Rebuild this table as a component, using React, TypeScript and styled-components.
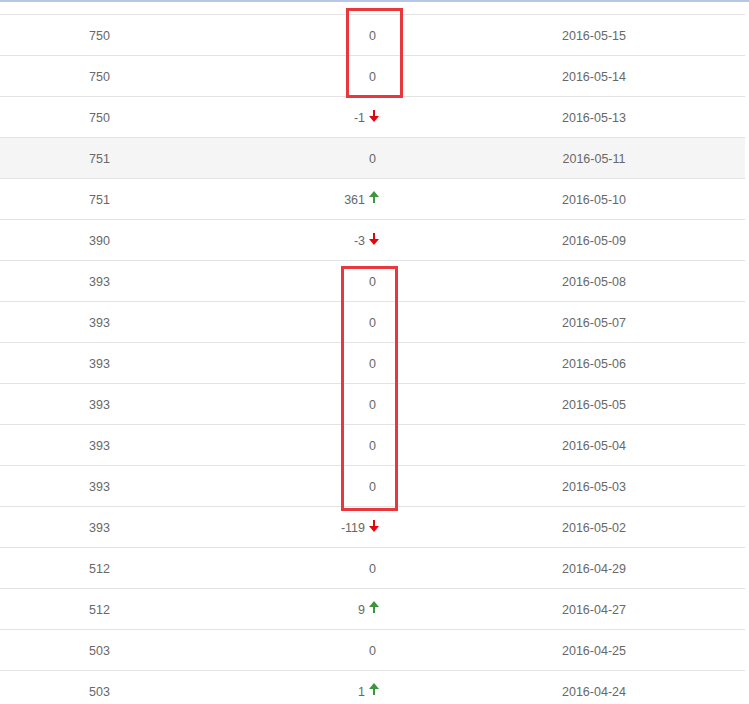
import styled, { createGlobalStyle } from "styled-components";

const GlobalStyle = createGlobalStyle`
  body {
    margin: 0;
    background: #fff;
    font-family: "Liberation Sans", Arial, sans-serif;
  }
`;

type Trend = "up" | "down" | null;

const rows: { rank: number; change: number; trend: Trend; date: string }[] = [
  { rank: 750, change: 0, trend: null, date: "2016-05-15" },
  { rank: 750, change: 0, trend: null, date: "2016-05-14" },
  { rank: 750, change: -1, trend: "down", date: "2016-05-13" },
  { rank: 751, change: 0, trend: null, date: "2016-05-11" },
  { rank: 751, change: 361, trend: "up", date: "2016-05-10" },
  { rank: 390, change: -3, trend: "down", date: "2016-05-09" },
  { rank: 393, change: 0, trend: null, date: "2016-05-08" },
  { rank: 393, change: 0, trend: null, date: "2016-05-07" },
  { rank: 393, change: 0, trend: null, date: "2016-05-06" },
  { rank: 393, change: 0, trend: null, date: "2016-05-05" },
  { rank: 393, change: 0, trend: null, date: "2016-05-04" },
  { rank: 393, change: 0, trend: null, date: "2016-05-03" },
  { rank: 393, change: -119, trend: "down", date: "2016-05-02" },
  { rank: 512, change: 0, trend: null, date: "2016-04-29" },
  { rank: 512, change: 9, trend: "up", date: "2016-04-27" },
  { rank: 503, change: 0, trend: null, date: "2016-04-25" },
  { rank: 503, change: 1, trend: "up", date: "2016-04-24" },
];

// Styled Components
const Page = styled.div`
  width: 749px;
  height: 704px;
  overflow: hidden;
  border-top: 2px solid #b4c8e4;
  box-sizing: border-box;
`;

const Table = styled.div`
  position: relative;
  width: 745px;
  padding-top: 12px;
`;

const Row = styled.div<{ $striped?: boolean }>`
  display: grid;
  grid-template-columns: 199px 244px 1fr;
  height: 40px;
  border-top: 1px solid #e3e3e3;
  background: ${(p) => (p.$striped ? "#f5f5f5" : "#fff")};
  color: #686868;
  font-size: 12.5px;
`;

const Cell = styled.div<{ $align?: "center" | "right" }>`
  display: flex;
  align-items: center;
  justify-content: ${(p) => (p.$align === "right" ? "flex-end" : "center")};
  padding-top: 2px;
`;

const ChangeCell = styled(Cell)<{ $plain?: boolean }>`
  padding-right: ${(p) => (p.$plain ? "67px" : "64px")};
  gap: 4px;
`;

const Arrow = styled.svg<{ $up?: boolean }>`
  width: 10px;
  height: 12px;
  margin-top: ${(p) => (p.$up ? "-6px" : "-4px")};
`;

const Highlight = styled.div<{ $left: number; $top: number; $w: number; $h: number }>`
  position: absolute;
  left: ${(p) => p.$left}px;
  top: ${(p) => p.$top}px;
  width: ${(p) => p.$w}px;
  height: ${(p) => p.$h}px;
  border: 3px solid #e8383d;
  box-sizing: border-box;
  pointer-events: none;
`;

const TrendIcon = ({ trend }: { trend: Trend }) => {
  if (trend === "up") {
    return (
      <Arrow $up viewBox="0 0 10 12">
        <polygon points="5,0 10,6 6,6 6,12 4,12 4,6 0,6" fill="#3d963d" />
      </Arrow>
    );
  }
  return (
    <Arrow viewBox="0 0 10 12">
      <polygon points="4,0 6,0 6,6 10,6 5,12 0,6 4,6" fill="#e3060f" />
    </Arrow>
  );
};

export default function App() {
  return (
    <>
      <GlobalStyle />
      <Page>
        <Table>
          {rows.map((r, i) => (
            <Row key={r.date} $striped={i === 3}>
              <Cell>{r.rank}</Cell>
              <ChangeCell $align="right" $plain={!r.trend}>
                <span>{r.change}</span>
                {r.trend && <TrendIcon trend={r.trend} />}
              </ChangeCell>
              <Cell>{r.date}</Cell>
            </Row>
          ))}
          <Highlight $left={346} $top={6} $w={57} $h={90} />
          <Highlight $left={341} $top={264} $w={57} $h={245} />
        </Table>
      </Page>
    </>
  );
}
